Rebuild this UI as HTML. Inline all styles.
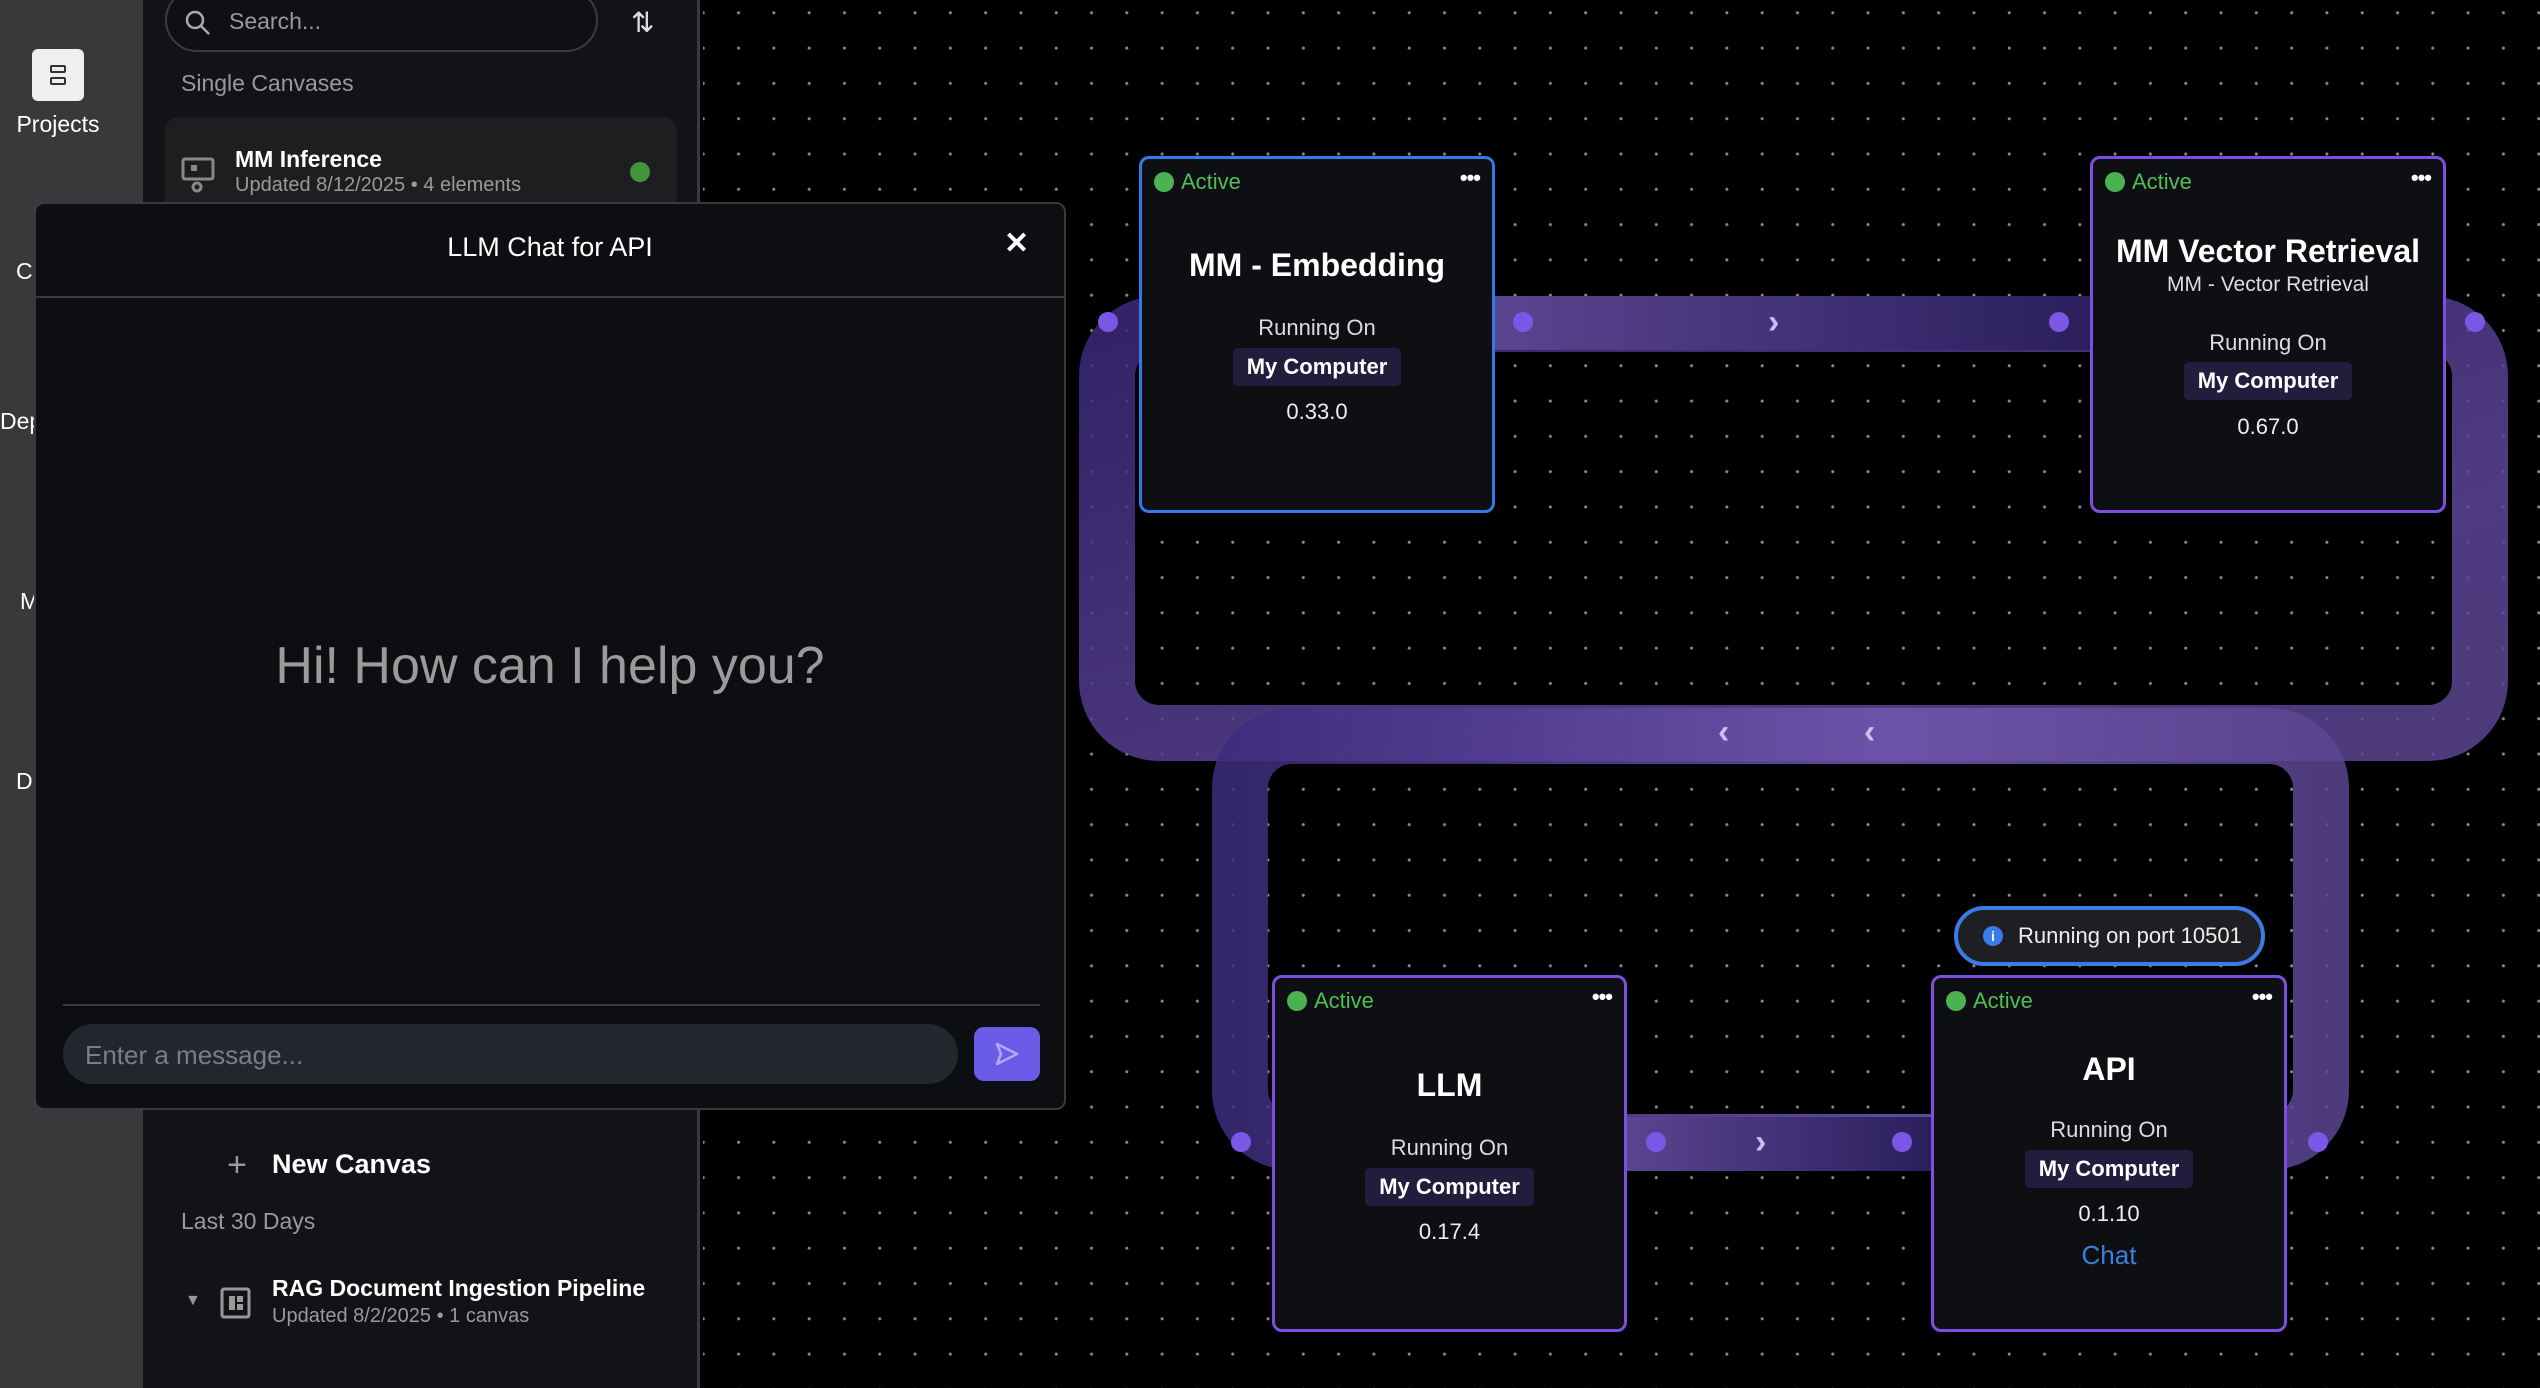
<!DOCTYPE html>
<html><head><meta charset="utf-8"><style>
*{box-sizing:border-box;margin:0;padding:0}
body{width:2540px;height:1388px;overflow:hidden;background:#000;font-family:"Liberation Sans",sans-serif;position:relative;color:#fff}
.abs{position:absolute}
#rail{left:0;top:0;width:143px;height:1388px;background:#38393b}
#side{left:143px;top:0;width:557px;height:1388px;background:#131317;border-right:3px solid #3a3a3e}
#canvas{left:703px;top:0;width:1837px;height:1388px;background-color:#000;background-image:radial-gradient(circle,#8a8a8a 1.3px,transparent 1.8px);background-size:35.3px 35.3px;background-position:-17.4px -4.85px}
.node{position:absolute;background:#0e0f13;border:3px solid #7b4fe0;border-radius:10px}
.t{position:absolute;left:0;width:100%;text-align:center;white-space:nowrap}
.act{position:absolute;left:12px;top:10px;color:#4fbf55;font-size:22px;line-height:26px}
.act:before{content:"";display:inline-block;width:20px;height:20px;border-radius:50%;background:#4cb14f;vertical-align:-3px;margin-right:7px}
.dots{position:absolute;right:12px;top:6px;font-size:22px;letter-spacing:-1px;font-weight:bold}
.badge{display:inline-block;background:#231d3d;border-radius:5px;padding:6px 14px;font-weight:bold;font-size:22px}
.port{position:absolute;width:20px;height:20px;border-radius:50%;background:#7b57e6}
.arr{position:absolute;color:#c9bff0;font-size:34px;line-height:34px;font-weight:bold}
</style></head><body>
<div id="rail" class="abs">
 <div class="abs" style="left:32px;top:49px;width:52px;height:52px;background:#efefef;border-radius:6px"></div>
 <div class="abs" style="left:50px;top:65px;width:16px;height:8px;border:2px solid #333;border-radius:2px"></div>
 <div class="abs" style="left:50px;top:77px;width:16px;height:8px;border:2px solid #333;border-radius:2px"></div>
 <div class="abs" style="left:0;width:116px;top:111px;text-align:center;font-size:23px">Projects</div>
 <div class="abs" style="left:16px;top:258px;font-size:23px">C</div>
 <div class="abs" style="left:0;top:408px;font-size:23px">Dep</div>
 <div class="abs" style="left:20px;top:588px;font-size:23px">M</div>
 <div class="abs" style="left:16px;top:768px;font-size:23px">D</div>
</div>
<div id="side" class="abs">
 <div class="abs" style="left:22px;top:-12px;width:433px;height:64px;border:2px solid #3c3c40;border-radius:32px;background:#0f1013"></div>
 <svg class="abs" style="left:40px;top:8px" width="30" height="30" viewBox="0 0 30 30"><circle cx="12" cy="12" r="8" stroke="#aaa" stroke-width="2.5" fill="none"/><path d="M18 18l8 8" stroke="#aaa" stroke-width="2.5"/></svg>
 <div class="abs" style="left:86px;top:8px;font-size:23px;color:#9a9a9a">Search...</div>
 <div class="abs" style="left:488px;top:6px;font-size:28px;color:#ddd">⇅</div>
 <div class="abs" style="left:38px;top:70px;font-size:23px;color:#9a9a9a">Single Canvases</div>
 <div class="abs" style="left:22px;top:117px;width:512px;height:110px;background:#1d1e20;border-radius:14px"></div>
 <svg class="abs" style="left:38px;top:155px" width="36" height="40" viewBox="0 0 36 40"><rect x="2" y="4" width="30" height="20" rx="2" stroke="#888" stroke-width="3" fill="none"/><rect x="10" y="10" width="6" height="6" fill="#888"/><circle cx="16" cy="32" r="4" stroke="#888" stroke-width="3" fill="none"/></svg>
 <div class="abs" style="left:92px;top:146px;font-size:23px;font-weight:bold">MM Inference</div>
 <div class="abs" style="left:92px;top:174px;font-size:20px;color:#9a9a9a">Updated 8/12/2025 • 4 elements</div>
 <div class="abs" style="left:487px;top:162px;width:20px;height:20px;border-radius:50%;background:#44913f"></div>
 <div class="abs" style="left:84px;top:1146px;font-size:34px;color:#999;font-weight:300">+</div>
 <div class="abs" style="left:129px;top:1149px;font-size:27px;font-weight:bold">New Canvas</div>
 <div class="abs" style="left:38px;top:1208px;font-size:23px;color:#9a9a9a">Last 30 Days</div>
 <div class="abs" style="left:42px;top:1292px;font-size:16px;color:#999">▼</div>
 <svg class="abs" style="left:77px;top:1287px" width="32" height="32" viewBox="0 0 32 32"><rect x="2" y="2" width="27" height="28" rx="2" stroke="#999" stroke-width="3" fill="none"/><rect x="9" y="9" width="6" height="14" fill="#999"/><rect x="17" y="9" width="6" height="6" fill="#999"/><rect x="17" y="17" width="6" height="6" fill="#999"/></svg>
 <div class="abs" style="left:129px;top:1275px;font-size:23px;font-weight:bold">RAG Document Ingestion Pipeline</div>
 <div class="abs" style="left:129px;top:1305px;font-size:20px;color:#9a9a9a">Updated 8/2/2025 • 1 canvas</div>
</div>
<div id="canvas" class="abs"></div>
<svg class="abs" style="left:0;top:0" width="2540" height="1388">
 <defs>
  <linearGradient id="g1" x1="0" y1="0" x2="1" y2="1"><stop offset="0" stop-color="#3b2a78" stop-opacity=".85"/><stop offset=".7" stop-color="#5d4596" stop-opacity=".85"/><stop offset="1" stop-color="#5a4590" stop-opacity=".85"/></linearGradient>
  <linearGradient id="g2" x1="0" y1="0" x2="1" y2="0"><stop offset="0" stop-color="#3d2d7e" stop-opacity=".85"/><stop offset=".6" stop-color="#7257b0" stop-opacity=".85"/><stop offset="1" stop-color="#5c4592" stop-opacity=".85"/></linearGradient>
  <linearGradient id="g3" x1="0" y1="0" x2="1" y2="0"><stop offset="0" stop-color="#5a4590"/><stop offset="1" stop-color="#2a1f5c"/></linearGradient>
 </defs>
 <rect x="1107" y="324" width="1373" height="409" rx="52" fill="none" stroke="url(#g1)" stroke-width="56"/>
 <rect x="1240" y="736" width="1081" height="406" rx="52" fill="none" stroke="url(#g2)" stroke-width="56"/>
 <rect x="1494" y="296" width="596" height="54" fill="url(#g3)"/>
 <rect x="1626" y="1117" width="305" height="54" fill="url(#g3)"/>
</svg>
<div class="port" style="left:1098px;top:312px"></div>
<div class="port" style="left:1513px;top:312px"></div>
<div class="port" style="left:2049px;top:312px"></div>
<div class="port" style="left:2465px;top:312px"></div>
<div class="port" style="left:1231px;top:1132px"></div>
<div class="port" style="left:1646px;top:1132px"></div>
<div class="port" style="left:1892px;top:1132px"></div>
<div class="port" style="left:2308px;top:1132px"></div>
<div class="arr" style="left:1768px;top:305px">›</div>
<div class="arr" style="left:1718px;top:715px">‹</div>
<div class="arr" style="left:1864px;top:715px">‹</div>
<div class="arr" style="left:1755px;top:1125px">›</div>

<div class="node" style="left:1139px;top:156px;width:356px;height:357px;border-color:#3579e8">
 <div class="act">Active</div><div class="dots">•••</div>
 <div class="t" style="top:88px;font-size:32px;font-weight:bold">MM - Embedding</div>
 <div class="t" style="top:156px;font-size:22px;color:#ddd">Running On</div>
 <div class="t" style="top:189px"><span class="badge">My Computer</span></div>
 <div class="t" style="top:240px;font-size:22px;color:#eee">0.33.0</div>
</div>
<div class="node" style="left:2090px;top:156px;width:356px;height:357px">
 <div class="act">Active</div><div class="dots">•••</div>
 <div class="t" style="top:74px;font-size:32px;font-weight:bold">MM Vector Retrieval</div>
 <div class="t" style="top:114px;font-size:21px;color:#ddd">MM - Vector Retrieval</div>
 <div class="t" style="top:171px;font-size:22px;color:#ddd">Running On</div>
 <div class="t" style="top:203px"><span class="badge">My Computer</span></div>
 <div class="t" style="top:255px;font-size:22px;color:#eee">0.67.0</div>
</div>
<div class="node" style="left:1272px;top:975px;width:355px;height:357px">
 <div class="act">Active</div><div class="dots">•••</div>
 <div class="t" style="top:89px;font-size:32px;font-weight:bold">LLM</div>
 <div class="t" style="top:157px;font-size:22px;color:#ddd">Running On</div>
 <div class="t" style="top:190px"><span class="badge">My Computer</span></div>
 <div class="t" style="top:241px;font-size:22px;color:#eee">0.17.4</div>
</div>
<div class="node" style="left:1931px;top:975px;width:356px;height:357px">
 <div class="act">Active</div><div class="dots">•••</div>
 <div class="t" style="top:73px;font-size:32px;font-weight:bold">API</div>
 <div class="t" style="top:139px;font-size:22px;color:#ddd">Running On</div>
 <div class="t" style="top:172px"><span class="badge">My Computer</span></div>
 <div class="t" style="top:223px;font-size:22px;color:#eee">0.1.10</div>
 <div class="t" style="top:262px;font-size:26px;color:#3b7fdc">Chat</div>
</div>
<div class="abs" style="left:1954px;top:906px;width:311px;height:60px;border:4px solid #3a7be8;border-radius:30px;background:#1e1f22">
 <div class="abs" style="left:25px;top:16px;width:20px;height:20px;border-radius:50%;background:#3a7be8;color:#fff;font-size:14px;font-weight:bold;text-align:center;line-height:20px">i</div>
 <div class="abs" style="left:60px;top:13px;font-size:22px;color:#eee">Running on port 10501</div>
</div>

<div class="abs" style="left:34px;top:202px;width:1032px;height:908px;background:#0d0e11;border:2px solid #3a3a3e;border-radius:10px">
 <div class="abs" style="left:0;width:100%;top:28px;text-align:center;font-size:27px">LLM Chat for API</div>
 <div class="abs" style="left:968px;top:22px;font-size:30px;font-weight:bold">✕</div>
 <div class="abs" style="left:0;top:92px;width:100%;height:2px;background:#3a3a3e"></div>
 <div class="abs" style="left:0;width:100%;top:432px;text-align:center;font-size:52px;color:#9a9a9a;font-weight:300">Hi! How can I help you?</div>
 <div class="abs" style="left:27px;top:800px;width:977px;height:2px;background:#3a3a3e"></div>
 <div class="abs" style="left:27px;top:820px;width:895px;height:60px;background:#22272e;border-radius:30px">
  <div class="abs" style="left:22px;top:16px;font-size:26px;color:#7a7d84">Enter a message...</div>
 </div>
 <div class="abs" style="left:938px;top:823px;width:66px;height:54px;background:#6b5ce7;border-radius:10px">
  <svg class="abs" style="left:20px;top:14px" width="26" height="26" viewBox="0 0 26 26"><path d="M3 3L23 13L3 23L7 13Z" stroke="#b0a8f5" stroke-width="2.5" fill="none" stroke-linejoin="round"/></svg>
 </div>
</div>
</body></html>
